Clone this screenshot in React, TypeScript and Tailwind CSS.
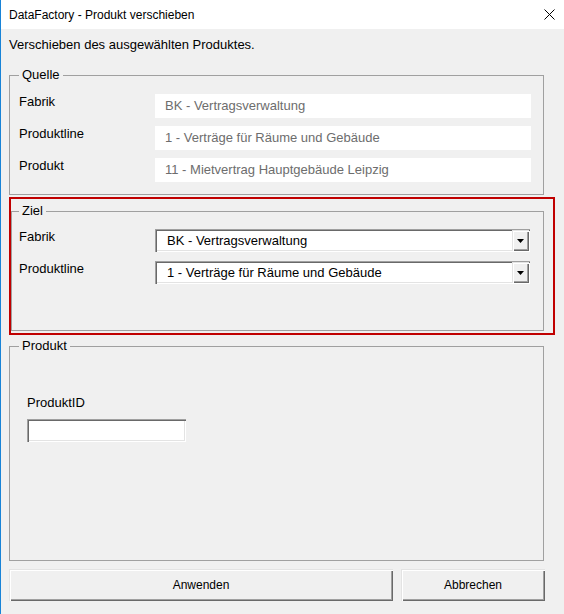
import React from "react";

const sunken =
  "shadow-[inset_1px_1px_0_#a0a0a0,inset_2px_2px_0_#696969,inset_-1px_-1px_0_#ffffff,inset_-2px_-2px_0_#e3e3e3]";
const raised =
  "shadow-[inset_1px_1px_0_#e3e3e3,inset_2px_2px_0_#ffffff,inset_-1px_-1px_0_#696969,inset_-2px_-2px_0_#a0a0a0]";

function ReadOnlyRow({ label, value }: { label: string; value: string }) {
  return (
    <div className="flex items-start">
      <div className="w-[136px] leading-[16px]">{label}</div>
      <div className="w-[376px] h-[24px] bg-white pl-[10px] flex items-center text-[#6d6d6d]">
        {value}
      </div>
    </div>
  );
}

function SelectRow({ label, value }: { label: string; value: string }) {
  return (
    <div className="flex items-start">
      <div className="w-[136px] leading-[16px]">{label}</div>
      <div className={`w-[375px] h-[23px] bg-white flex items-stretch ${sunken}`}>
        <div className="flex-1 pl-[12px] flex items-center">{value}</div>
        <div
          className={`w-[17px] my-[1px] mr-[1px] bg-[#f0f0f0] flex items-center justify-center ${raised}`}
        >
          <svg width="7" height="4" viewBox="0 0 7 4">
            <polygon points="0,0 7,0 3.5,4" fill="#000" />
          </svg>
        </div>
      </div>
    </div>
  );
}

export default function App() {
  return (
    <div className="w-[564px] h-[614px] bg-[#f0f0f0] border-l border-[#1883d7] flex flex-col font-['Liberation_Sans',Arial,sans-serif] text-[13px] text-black overflow-hidden">
      <div className="h-[29px] shrink-0 bg-white flex items-center justify-between pl-[8px] pr-[9px] text-[12px]">
        <span>DataFactory - Produkt verschieben</span>
        <svg width="11" height="11" viewBox="0 0 11 11">
          <line x1="0.5" y1="0.5" x2="10.5" y2="10.5" stroke="#000" strokeWidth="1" />
          <line x1="10.5" y1="0.5" x2="0.5" y2="10.5" stroke="#000" strokeWidth="1" />
        </svg>
      </div>

      <div className="pl-[8px] flex flex-col">
        <p className="mt-[8px] leading-[16px]">Verschieben des ausgewählten Produktes.</p>

        <fieldset className="mt-[14px] w-[535px] border border-[#a0a0a0] pl-[9px] pr-[11px] pb-[12px]">
          <legend className="px-[3px] leading-[16px]">Quelle</legend>
          <div className="mt-[11px] flex flex-col gap-[8px]">
            <ReadOnlyRow label="Fabrik" value="BK - Vertragsverwaltung" />
            <ReadOnlyRow label="Produktline" value="1 - Verträge für Räume und Gebäude" />
            <ReadOnlyRow label="Produkt" value="11 - Mietvertrag Hauptgebäude Leipzig" />
          </div>
        </fieldset>

        <div className="mt-[2px] w-[546px] border-2 border-[#c00000] pt-[4px] pb-[2px]">
          <fieldset className="w-[533px] border border-[#a0a0a0] pl-[7px] pb-[46px]">
            <legend className="px-[3px] leading-[16px]">Ziel</legend>
            <div className="mt-[10px] flex flex-col gap-[9px]">
              <SelectRow label="Fabrik" value="BK - Vertragsverwaltung" />
              <SelectRow label="Produktline" value="1 - Verträge für Räume und Gebäude" />
            </div>
          </fieldset>
        </div>

        <fieldset className="mt-[3px] w-[535px] h-[223px] border border-[#a0a0a0] pl-[9px]">
          <legend className="px-[3px] leading-[16px]">Produkt</legend>
          <div className="ml-[8px] flex flex-col">
            <div className="mt-[41px] leading-[16px]">ProduktID</div>
            <div className={`mt-[8px] w-[159px] h-[23px] bg-white ${sunken}`} />
          </div>
        </fieldset>

        <div className="mt-[8px] flex gap-[8px]">
          <button className={`w-[384px] h-[32px] bg-[#f0f0f0] text-[12px] ${raised}`}>
            Anwenden
          </button>
          <button className={`w-[144px] h-[32px] bg-[#f0f0f0] text-[12px] ${raised}`}>
            Abbrechen
          </button>
        </div>
      </div>
    </div>
  );
}
